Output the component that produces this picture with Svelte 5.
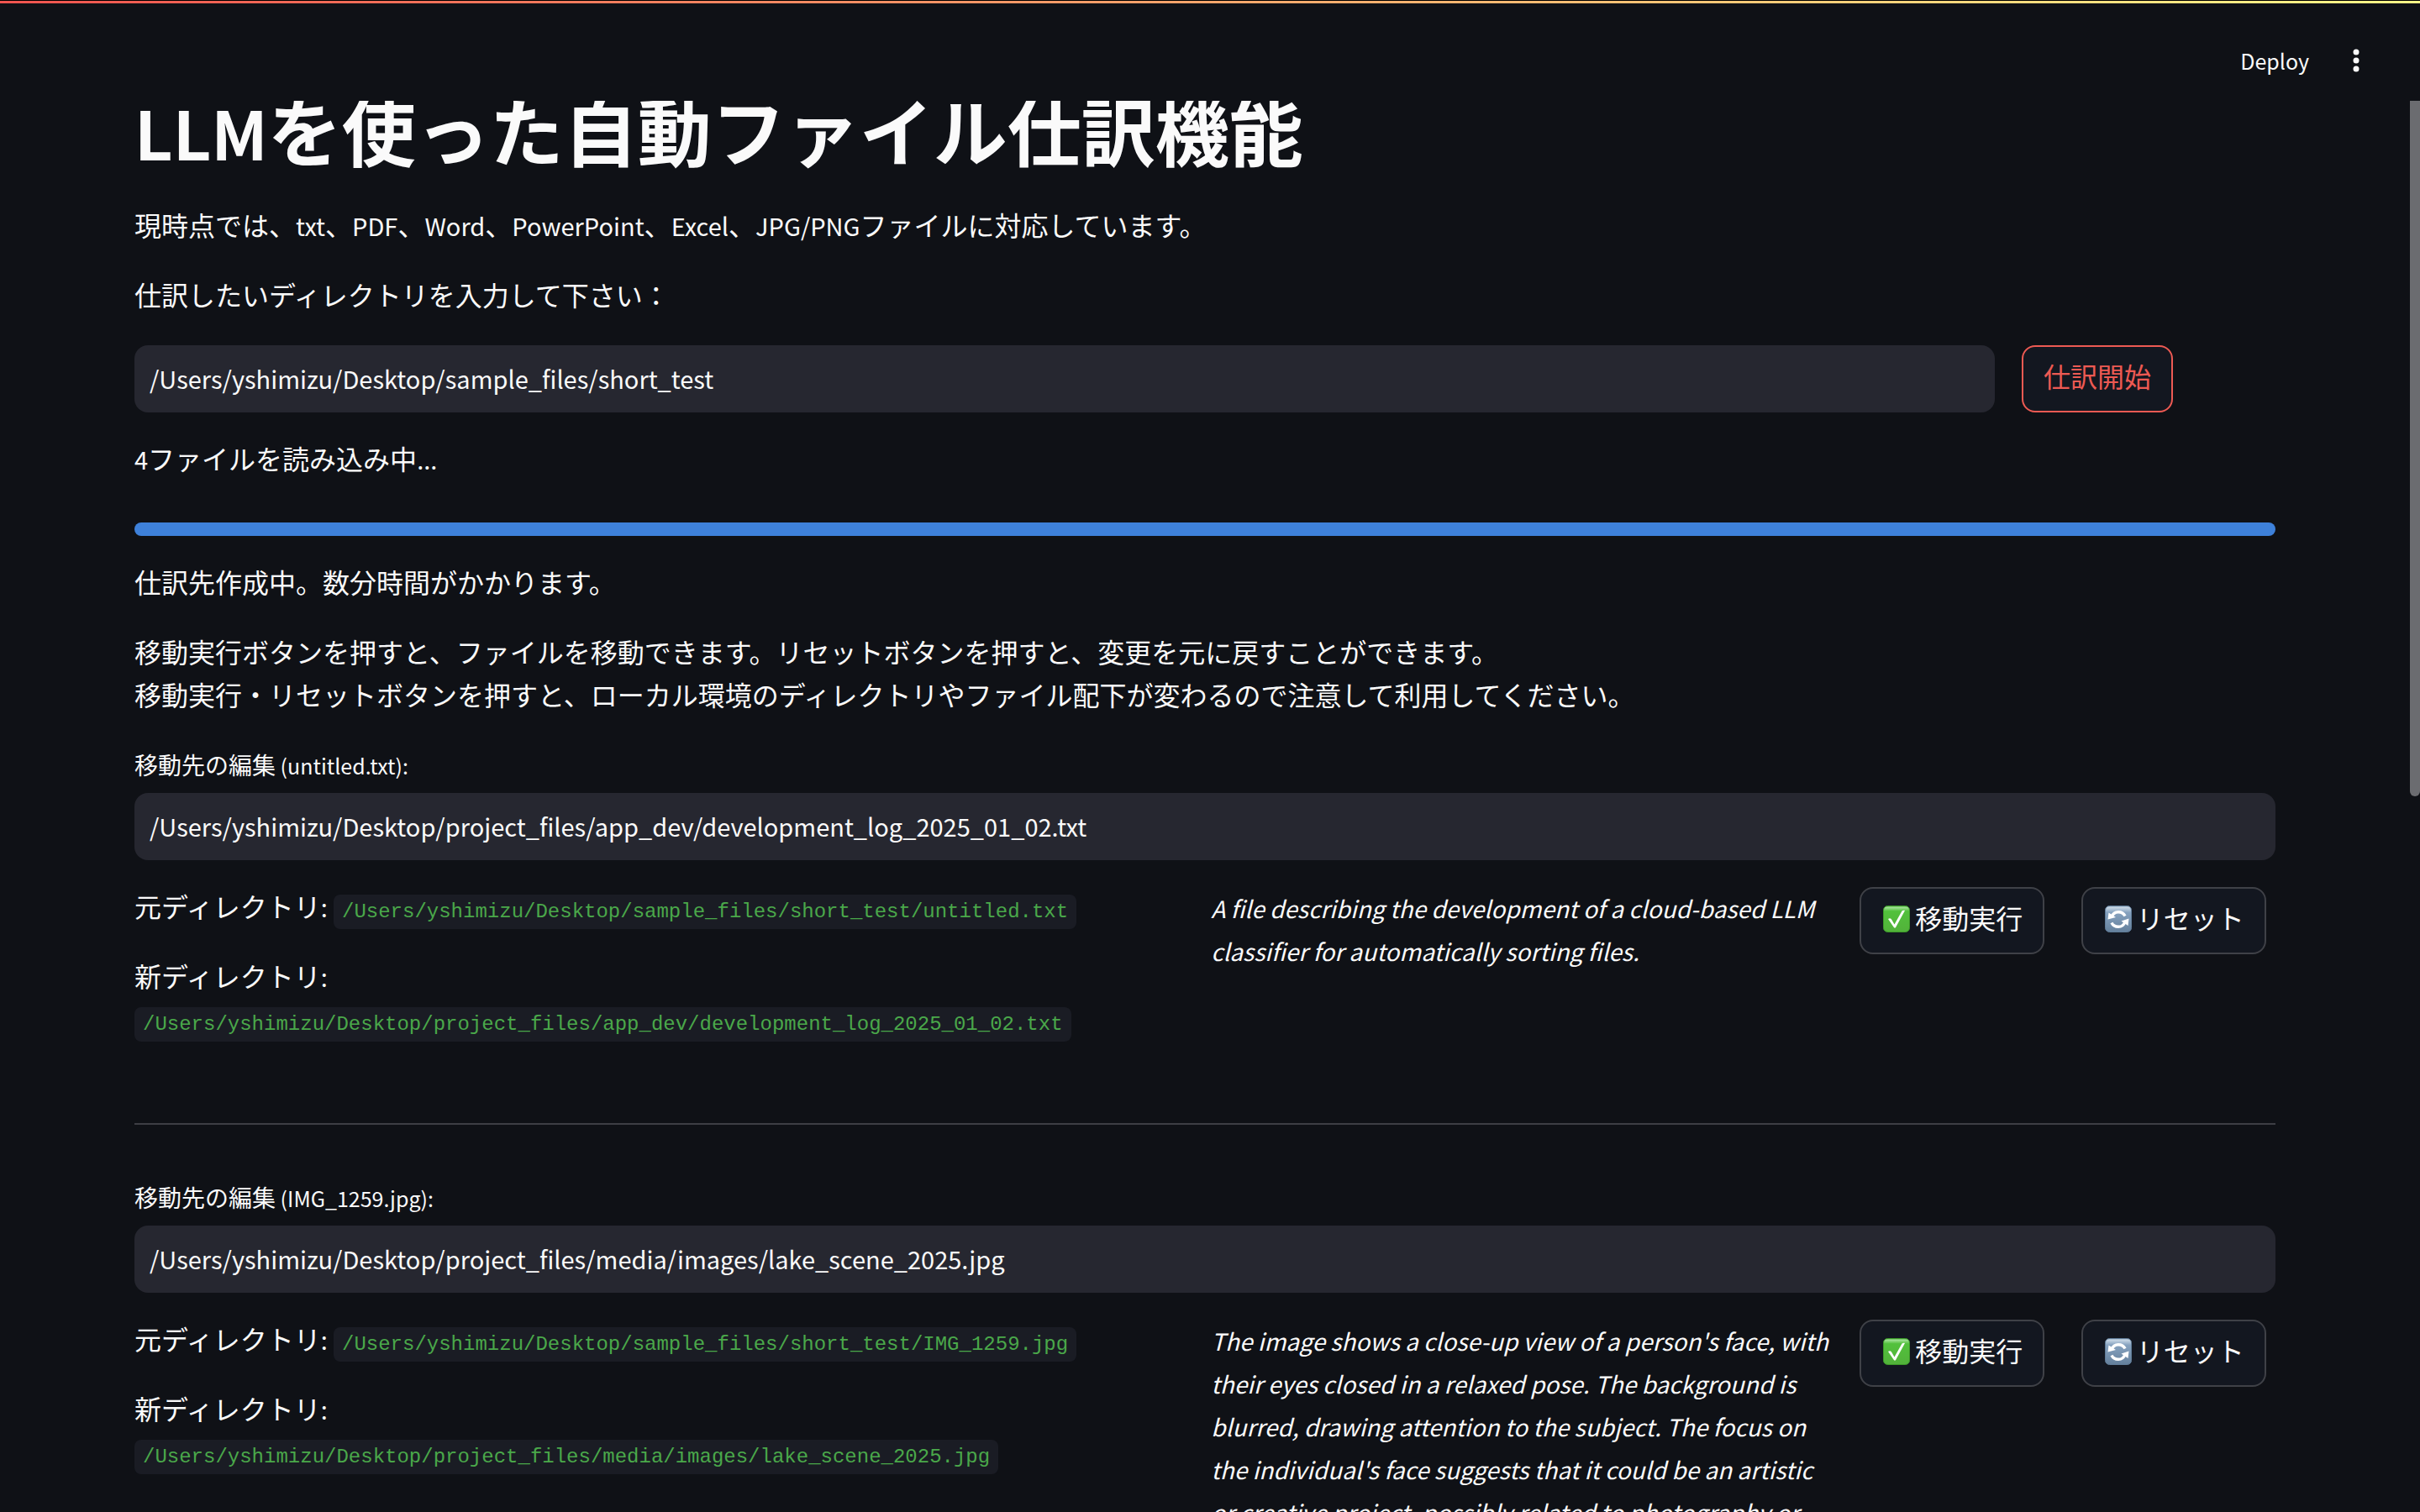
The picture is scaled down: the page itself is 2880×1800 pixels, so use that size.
<script>
  const startPath = '/Users/yshimizu/Desktop/sample_files/short_test';
  const files = [
    {
      name: 'untitled.txt',
      source: '/Users/yshimizu/Desktop/sample_files/short_test/untitled.txt',
      target: '/Users/yshimizu/Desktop/project_files/app_dev/development_log_2025_01_02.txt',
      summary: 'A file describing the development of a cloud-based LLM\nclassifier for automatically sorting files.'
    },
    {
      name: 'IMG_1259.jpg',
      source: '/Users/yshimizu/Desktop/sample_files/short_test/IMG_1259.jpg',
      target: '/Users/yshimizu/Desktop/project_files/media/images/lake_scene_2025.jpg',
      summary:
        "The image shows a close-up view of a person's face, with\ntheir eyes closed in a relaxed pose. The background is\nblurred, drawing attention to the subject. The focus on\nthe individual's face suggests that it could be an artistic\nor creative project, possibly related to photography or"
    }
  ];
</script>

<div class="app">
  <div class="decoration"></div>
  <header>
    <button class="deploy" type="button">Deploy</button>
    <button class="menu" type="button" aria-label="Menu">
      <svg viewBox="0 0 48 48" width="48" height="48" fill="currentColor">
        <circle cx="24" cy="14" r="3.5" /><circle cx="24" cy="24" r="3.5" /><circle cx="24" cy="34" r="3.5" />
      </svg>
    </button>
  </header>
  <main>
    <h1><span class="latin">LLM</span>を使った自動ファイル仕訳機能</h1>
    <div class="stack">
      <p>現時点では、<span class="latin">txt</span>、<span class="latin">PDF</span>、<span class="latin">Word</span>、<span class="latin">PowerPoint</span>、<span class="latin">Excel</span>、<span class="latin">JPG/PNG</span>ファイルに対応しています。</p>
      <p>仕訳したいディレクトリを入力して下さい：</p>
      <div class="start">
        <input type="text" value={startPath} aria-label="仕訳したいディレクトリ" />
        <div><button class="btn primary" type="button">仕訳開始</button></div>
      </div>
      <p><span class="latin">4</span>ファイルを読み込み中<span class="latin">...</span></p>
      <div class="progress" role="progressbar" aria-valuenow="100" aria-label="進捗"></div>
      <p>仕訳先作成中。数分時間がかかります。</p>
      <p>移動実行ボタンを押すと、ファイルを移動できます。リセットボタンを押すと、変更を元に戻すことができます。<br />移動実行・リセットボタンを押すと、ローカル環境のディレクトリやファイル配下が変わるので注意して利用してください。</p>
    </div>
    {#each files as file, i}
      <section>
        <label for="target-{i}">移動先の編集<span class="latin">{' '}({file.name}):</span></label>
        <input id="target-{i}" type="text" value={file.target} />
        <div class="columns">
          <div class="paths">
            <p>元ディレクトリ<span class="latin">:</span> <code>{file.source}</code></p>
            <p>新ディレクトリ<span class="latin">:</span> <code>{file.target}</code></p>
          </div>
          <p class="summary"><em>{file.summary}</em></p>
          <div>
            <button class="btn" type="button">
              <svg class="emoji" viewBox="0 0 32 32" aria-hidden="true">
                <defs>
                  <linearGradient id="green-{i}" x1="0" y1="0" x2="0" y2="1">
                    <stop offset="0" stop-color="#2f9e1f" /><stop offset=".05" stop-color="#a5e39a" />
                    <stop offset=".2" stop-color="#52c13c" /><stop offset="1" stop-color="#52b23a" />
                  </linearGradient>
                </defs>
                <rect x=".5" y=".5" width="31" height="31" rx="5" fill="url(#green-{i})" stroke="#3c9a28" />
                <path d="M6 16c2-1.500 3.500-.8 4.500 1.200l3 5.300L22.500 6.500c1-1 2.500-1 3.500-.5L14.800 26.500h-1.600z" fill="#fff" />
              </svg>移動実行
            </button>
          </div>
          <div>
            <button class="btn" type="button">
              <svg class="emoji" viewBox="0 0 32 32" aria-hidden="true">
                <defs>
                  <linearGradient id="blue-{i}" x1="0" y1="0" x2="0" y2="1">
                    <stop offset="0" stop-color="#7c98b3" /><stop offset=".05" stop-color="#c9d8e6" />
                    <stop offset=".25" stop-color="#86a2bf" /><stop offset="1" stop-color="#64809c" />
                  </linearGradient>
                </defs>
                <rect x=".5" y=".5" width="31" height="31" rx="5" fill="url(#blue-{i})" stroke="#607c98" />
                <g fill="none" stroke="#fff" stroke-width="3.400">
                  <path d="M8 13.500c1.500-4 4.500-5.800 8-5.800 3.500 0 6.500 1.600 8 4.800" />
                  <path d="M24 19.500c-1.500 4-4.500 5.800-8 5.800-3.500 0-6.500-1.600-8-4.800" />
                </g>
                <path d="M4.500 8.500L3.500 16.500l9.500-2.500z M28.500 15.500L19.500 18.500l8 5.500z" fill="#fff" />
              </svg>リセット
            </button>
          </div>
        </div>
      </section>
      {#if i < files.length - 1}<hr />{/if}
    {/each}
  </main>
  <div class="thumb"></div>
</div>

<style>
  :global(body) { margin: 0; background: #0f1116; }
  * { box-sizing: border-box; }
  .app {
    position: relative;
    display: flex;
    flex-direction: column;
    height: 100vh;
    overflow: hidden;
    color: #fafafa;
    font-family: 'Noto Sans CJK JP', sans-serif;
    font-size: 32px;
    line-height: 51px;
  }
  .decoration {
    height: 4px;
    flex: none;
    border-top: 1px solid #000;
    background: linear-gradient(90deg, #f0544f, #fff787);
  }
  header {
    flex: none;
    height: 116px;
    display: flex;
    justify-content: flex-end;
    align-items: center;
    gap: 32px;
    padding: 20px 52px 0 0;
  }
  header button { border: 0; padding: 0; background: none; color: inherit; font-family: inherit; }
  .deploy { font-size: 25px; line-height: 40px; }
  .menu { display: flex; }
  main { flex: 1; min-height: 0; overflow: hidden; padding: 0 172px 0 160px; }
  h1 { margin: -21px 0 39px; font-size: 88px; line-height: 107px; font-weight: 700; }
  .latin { font-size: 29px; line-height: 1; }
  h1 .latin { font-size: 79px; }
  p { margin: 0; }
  .stack { display: flex; flex-direction: column; gap: 32px; }
  .stack p, .paths p { margin: -3px 0 3px; }
  .start { display: grid; grid-template-columns: 22fr 3fr; gap: 32px; }
  input {
    display: block;
    width: 100%;
    height: 80px;
    padding: 0 18px 2px;
    border: 0;
    border-radius: 16px;
    background: #262730;
    color: inherit;
    font: inherit;
    font-size: 29px;
  }
  .btn {
    display: flex;
    align-items: center;
    height: 80px;
    padding: 0 24px 7px;
    border: 2px solid #3f4147;
    border-radius: 16px;
    background: #131720;
    color: inherit;
    font: inherit;
    white-space: nowrap;
  }
  .primary { border-color: #ed5a53; color: #ed5a53; }
  .emoji { width: 32px; height: 32px; margin: 3px 6px 0 2px; flex: none; }
  .progress { height: 16px; margin-top: 16px; border-radius: 8px; background: #3e81da; }
  section { margin-top: 32px; }
  label { display: block; margin-bottom: 10px; font-size: 28px; line-height: 47px; }
  label .latin { font-size: 25px; }
  .columns { display: grid; grid-template-columns: 54fr 32fr 10fr 10fr; gap: 32px; margin-top: 32px; }
  .paths { display: flex; flex-direction: column; gap: 32px; min-width: 0; }
  code {
    padding: 7px 10px;
    border-radius: 8px;
    background: #1a1c24;
    color: #4aa84a;
    font-family: 'Liberation Mono', monospace;
    font-size: 24px;
    line-height: 1;
    white-space: nowrap;
  }
  .summary { white-space: pre; font-size: 28px; }
  hr { height: 2px; margin: 96px 0 63px; border: 0; background: #3d3e44; }
  hr + section { margin-top: 0; }
  .thumb { position: absolute; top: 120px; right: 0; width: 12px; height: 828px; border-radius: 0 0 6px 6px; background: #6b6c70; }
</style>
